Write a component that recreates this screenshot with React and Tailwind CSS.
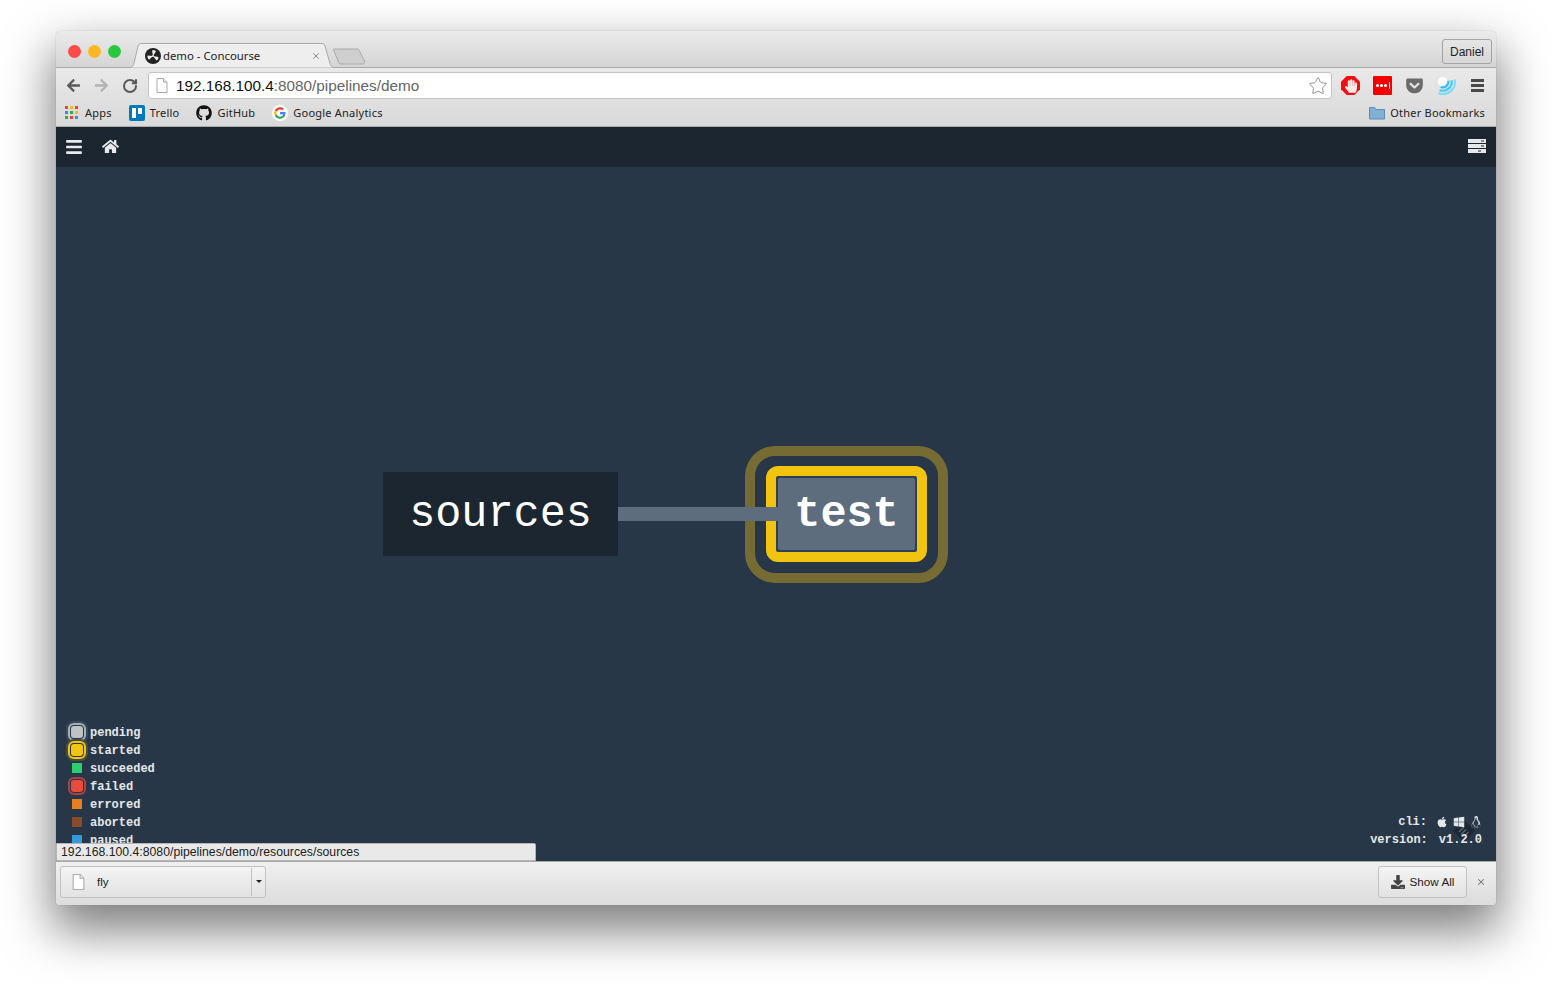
import React from "react";
import { FaGithub, FaHome, FaBars, FaApple, FaWindows, FaLinux, FaHandPaper, FaGetPocket, FaArrowLeft, FaArrowRight, FaDownload } from "react-icons/fa";
import { RotateCw, Star, X } from "lucide-react";

const ui = { fontFamily: '"Noto Sans", "DejaVu Sans", sans-serif' };
const sans = { fontFamily: '"Liberation Sans", sans-serif' };
const mono = { fontFamily: '"Liberation Mono", monospace' };

function Page({ className = "" }) {
  return (
    <svg viewBox="0 0 12 15" className={className}>
      <path d="M1 .5h6.5L11 4v10.5H1z" fill="#fff" stroke="#a9a9a9" />
      <path d="M7.5 .5V4H11" fill="#eee" stroke="#a9a9a9" />
    </svg>
  );
}

function Favicon() {
  return (
    <svg viewBox="0 0 16 16" className="w-4 h-4">
      <circle cx="8" cy="8" r="8" fill="#222" />
      <path d="M8 8 7 2.500c2-.6 3.500 0 4 .8zM8 8l5.500 1c.1 2-1 3.200-2 3.500zM8 8l-4 3.800C2.500 10.500 2.200 8.700 2.600 7.600z" fill="#eee" />
      <circle cx="8" cy="8" r="1" fill="#eee" />
    </svg>
  );
}

function GoogleG() {
  return (
    <svg viewBox="0 0 48 48" className="w-[16px] h-[16px] bg-white rounded-full p-[2px]">
      <path fill="#EA4335" d="M24 9.500c3.500 0 6.700 1.200 9.200 3.600l6.900-6.900C35.900 2.400 30.500 0 24 0 14.600 0 6.500 5.400 2.600 13.200l8 6.200C12.400 13.700 17.700 9.500 24 9.500z" />
      <path fill="#4285F4" d="M46.100 24.500c0-1.600-.1-3.100-.4-4.500H24v9h12.400c-.5 2.900-2.200 5.300-4.600 7l7.700 6c4.500-4.200 6.600-10.300 6.600-17.500z" />
      <path fill="#FBBC05" d="M10.500 28.600c-.5-1.400-.8-3-.8-4.600s.3-3.200.8-4.600l-8-6.200C.9 16.500 0 20.100 0 24s.9 7.500 2.600 10.800l7.900-6.200z" />
      <path fill="#34A853" d="M24 48c6.500 0 11.900-2.100 15.900-5.800l-7.700-6c-2.200 1.400-4.900 2.300-8.200 2.300-6.300 0-11.600-4.200-13.500-9.900l-8 6.200C6.500 42.600 14.600 48 24 48z" />
    </svg>
  );
}

function Apps() {
  const c = ["#ea4335", "#fbbc05", "#ea4335", "#4285f4", "#34a853", "#fbbc05", "#34a853", "#ea4335", "#4285f4"];
  return (
    <div className="grid grid-cols-3 gap-[2px] w-[13px]">
      {c.map((x, i) => (
        <div key={i} className="w-[3px] h-[3px]" style={{ backgroundColor: x }} />
      ))}
    </div>
  );
}

function Bookmark({ icon, label, className = "" }) {
  return (
    <div className={"flex items-center gap-[5px] " + className}>
      {icon}
      <span className="text-[11px] text-[#222] leading-none tracking-[0.22px]">{label}</span>
    </div>
  );
}

function Server() {
  return (
    <svg viewBox="0 0 18 15" className="w-[18px] h-[15px]">
      {[0, 5, 10].map((y) => (
        <g key={y}>
          <rect x="0" y={y} width="18" height="4" fill="#e6e9ec" />
          <rect x={y === 10 ? 10 : 13} y={y + 1.500} width="3" height="1" fill="#1b2631" />
        </g>
      ))}
    </svg>
  );
}

const legend = [
  ["pending", "bg-[#bdc3c7]", "shadow-[0_0_0_1px_#283747,0_0_0_3px_#a9b0b5,0_0_0_5px_#3a4959]"],
  ["started", "bg-[#f1c40f]", "shadow-[0_0_0_1px_#283747,0_0_0_3px_#f1c40f,0_0_0_5px_#4a4f3e]"],
  ["succeeded", "bg-[#2ecc71]", ""],
  ["failed", "bg-[#e74c3c]", "shadow-[0_0_0_1px_#283747,0_0_0_3px_#a94442]"],
  ["errored", "bg-[#e67e22]", ""],
  ["aborted", "bg-[#8b4a2b]", ""],
  ["paused", "bg-[#3498db]", ""],
];

function Legend() {
  return (
    <div className="absolute left-[16px] top-[556px] flex flex-col" style={mono}>
      {legend.map(([name, bg, ring]) => (
        <div key={name} className="flex items-center h-[18px]">
          <div className="w-[10px] flex justify-center">
            {ring ? (
              <div className={"w-[12px] h-[12px] shrink-0 rounded-[3px] " + bg + " " + ring} />
            ) : (
              <div className={"w-[10px] h-[10px] shrink-0 " + bg} />
            )}
          </div>
          <span className="ml-[8px] mt-[2px] text-[12px] font-bold text-[#e4e7ea] leading-none">{name}</span>
        </div>
      ))}
    </div>
  );
}

function Pipeline() {
  return (
    <>
      <div className="absolute left-[327px] top-[305px] w-[235px] h-[84px] pt-[2px] bg-[#1b2631] flex items-center justify-center text-white text-[43.500px] leading-none" style={mono}>
        sources
      </div>
      <div className="absolute left-[689px] top-[279px] w-[203px] h-[137px] rounded-[30px] border-[10px] border-[#756b33]" />
      <div className="absolute left-[710px] top-[299px] w-[161px] h-[96px] rounded-[12px] border-[10px] border-[#f1c40f] bg-[#2e4053] p-[2px]">
        <div className="relative w-full h-full pt-[2px] rounded-[2px] bg-[#5d6d7e] flex items-center justify-center text-white text-[43.500px] font-bold leading-none" style={mono}>
          test
        </div>
      </div>
      <div className="absolute left-[562px] top-[340px] w-[161px] h-[14px] bg-[#5d6d7e]" />
    </>
  );
}

export default function App() {
  return (
    <div className="w-[1552px] h-[985px] bg-white overflow-hidden pt-[31px] pl-[56px]" style={ui}>
      <div className="w-[1440px] h-[874px] rounded-t-[5px] rounded-b-[4px] overflow-hidden flex flex-col shadow-[0_22px_48px_4px_rgba(0,0,0,0.5),0_0_1px_rgba(0,0,0,0.4)]">
        {/* Tab strip */}
        <div className="relative h-[37px] shrink-0 bg-gradient-to-b from-[#ebebeb] to-[#d5d5d5] border-b border-[#a9a9a9] flex items-center">
          <div className="flex items-center gap-[7px] pl-[12px] mt-[4px]">
            <div className="w-[13px] h-[13px] rounded-full bg-[#fc4a47]" />
            <div className="w-[13px] h-[13px] rounded-full bg-[#fdb824]" />
            <div className="w-[13px] h-[13px] rounded-full bg-[#28c83f]" />
          </div>
          <svg viewBox="0 0 212 25" className="absolute left-[72px] top-[12px] w-[212px] h-[25px]">
            <path d="M0 24.500c4 0 5-1 6-4L10 3c.5-1.700 1.500-2.500 3-2.500h181c1.500 0 2.500.8 3 2.500l5 17.500c1 3 2 4 6 4" fill="#eeeeee" stroke="#a9a9a9" />
          </svg>
          <svg viewBox="0 0 34 17" className="absolute left-[277px] top-[17px] w-[34px] h-[17px]">
            <path d="M1 1h23c1 0 2 .5 2.500 2l5 10c.5 2-.5 3-2 3H8c-1.500 0-2-.5-2.500-2L1 3C.5 1.500 0 1 1 1z" fill="#cfcfcf" stroke="#a9a9a9" />
          </svg>
          <div className="absolute left-[89px] top-[17px] flex items-center gap-[2px]">
            <Favicon />
            <span className="text-[11.350px] text-[#222] leading-none -mt-[1px]">demo - Concourse</span>
          </div>
          <X className="absolute left-[255px] top-[20px] w-[10px] h-[10px] text-[#777]" strokeWidth={2} />
          <div className="ml-auto mr-[4px] mt-[5px] w-[50px] h-[25px] rounded-[3px] border border-[#a3a3a3] flex items-center justify-center text-[12px] text-[#222]" style={sans}>
            Daniel
          </div>
        </div>

        {/* Toolbar */}
        <div className="h-[32px] shrink-0 bg-gradient-to-b from-[#e9e9e9] to-[#e0e0e0] flex items-center pl-[10px] pr-[10px] pt-[3px]">
          <FaArrowLeft className="w-[15px] h-[15px] text-[#5a5a5a]" />
          <FaArrowRight className="ml-[13px] w-[15px] h-[15px] text-[#b3b3b3]" />
          <RotateCw className="ml-[13px] w-[16px] h-[16px] text-[#5a5a5a]" strokeWidth={3} />
          <div className="ml-[10px] w-[1184px] h-[27px] bg-white rounded-[3px] border border-[#c4c4c4] flex items-center pl-[7px] pr-[3px]">
            <Page className="w-[12px] h-[15px]" />
            <span className="ml-[8px] text-[15.300px] leading-none text-[#111]" style={sans}>
              192.168.100.4<span className="text-[#666]">:8080/pipelines/demo</span>
            </span>
            <Star className="ml-auto w-[20px] h-[20px] text-[#7d7d7d]" strokeWidth={1} />
          </div>
          <div className="ml-[9px] flex items-center gap-[13px]">
            <div className="w-[19px] h-[19px] bg-[#f10d12] flex items-center justify-center [clip-path:polygon(30%_0,70%_0,100%_30%,100%_70%,70%_100%,30%_100%,0_70%,0_30%)]">
              <FaHandPaper className="w-[12px] h-[14px] text-[#ffeaea]" />
            </div>
            <div className="w-[19px] h-[19px] rounded-[1px] bg-[#f40000] flex items-center justify-center gap-[1px]">
              {[0, 1, 2].map((i) => (
                <div key={i} className="w-[3px] h-[3px] rounded-full bg-white" />
              ))}
              <div className="w-[1px] h-[7px] bg-white ml-[1px]" />
            </div>
            <FaGetPocket className="w-[19px] h-[19px] text-[#6a6a6a]" />
            <svg viewBox="0 0 20 20" className="w-[19px] h-[19px]">
              <circle cx="6" cy="6" r="5" fill="#ffffff" />
              <path d="M11.900 5A6 6 0 0 1 3.900 11.600" fill="none" stroke="#2fbdf5" strokeWidth="2.200" />
              <path d="M15.400 4.300A9.500 9.500 0 0 1 2.700 14.900" fill="none" stroke="#45c8f7" strokeWidth="2.200" />
              <path d="M18.800 3.700A13 13 0 0 1 1.600 18.200" fill="none" stroke="#7bdcfb" strokeWidth="2.200" />
            </svg>
            <div className="w-[13px] ml-[2px] flex flex-col gap-[2px]">
              <div className="h-[3px] bg-[#4a4a4a]" />
              <div className="h-[3px] bg-[#4a4a4a]" />
              <div className="h-[3px] bg-[#4a4a4a]" />
            </div>
          </div>
        </div>

        {/* Bookmarks */}
        <div className="h-[26px] shrink-0 bg-gradient-to-b from-[#e0e0e0] to-[#d9d9d9] flex items-center pl-[9px] pr-[11px] pb-[1px]">
          <Bookmark icon={<Apps />} label="Apps" className="gap-[7px]" />
          <Bookmark icon={<div className="w-[16px] h-[16px] rounded-[2px] bg-[#0079bf] flex gap-[2px] p-[3px] items-start"><div className="w-[4px] h-[10px] bg-white" /><div className="w-[4px] h-[6px] bg-white" /></div>} label="Trello" className="ml-[17px]" />
          <Bookmark icon={<FaGithub className="w-[16px] h-[16px] text-[#111]" />} label="GitHub" className="ml-[17px]" />
          <Bookmark icon={<GoogleG />} label="Google Analytics" className="ml-[17px]" />
          <Bookmark
            className="ml-auto"
            label="Other Bookmarks"
            icon={
              <svg viewBox="0 0 16 14" className="w-[16px] h-[14px]">
                <path d="M.5 13V1.500h5l1.500 2h8.500V13z" fill="#7fb0d6" stroke="#5f8cad" />
              </svg>
            }
          />
        </div>

        {/* App nav */}
        <div className="h-[41px] shrink-0 border-t border-[#a9a9a9] bg-[#1b2631] flex items-center pl-[10px] pr-[10px] pb-[1px]">
          <FaBars className="w-[16px] h-[18px] text-[#e8eaec]" />
          <FaHome className="ml-[20px] w-[17px] h-[17px] text-[#e8eaec]" />
          <div className="ml-auto">
            <Server />
          </div>
        </div>

        {/* Canvas */}
        <div className="relative flex-1 bg-[#283747] overflow-hidden">
          <Pipeline />
          <Legend />
          <svg viewBox="0 0 22 22" className="absolute left-[1397px] top-[653px] w-[22px] h-[22px]">
            <path d="M11 0 22 11 11 22 0 11z" fill="#161e28" fillOpacity="0.6" />
            <path d="M6 12l5-5M8 14.500l5-5M10.500 17l5-5" stroke="#5a6672" strokeWidth="1.300" />
          </svg>
          <div className="absolute right-[14px] top-[646px] flex flex-col items-end text-[12px] font-bold text-[#e4e7ea] leading-[18px]" style={mono}>
            <div className="flex items-center">
              <span>cli:</span>
              <FaApple className="ml-[9px] w-[12px] h-[12px]" />
              <FaWindows className="ml-[5px] w-[12px] h-[12px]" />
              <FaLinux className="ml-[5px] w-[12px] h-[12px]" />
            </div>
            <div className="flex">
              <span>version:</span>
              <span className="ml-[11px]">v1.2.0</span>
            </div>
          </div>
          <div className="absolute left-0 bottom-0 w-[480px] h-[18px] bg-[#e9e9e9] border border-[#b5b5b5] rounded-tr-[2px] flex items-center pl-[4px] text-[12.250px] text-[#222] leading-none" style={sans}>
            192.168.100.4:8080/pipelines/demo/resources/sources
          </div>
        </div>

        {/* Download shelf */}
        <div className="h-[44px] shrink-0 border-t border-[#a9a9a9] bg-gradient-to-b from-[#f0f0f0] to-[#dcdcdc] flex items-center pl-[4px] pr-[10px] pb-[4px]">
          <div className="w-[206px] h-[32px] rounded-[3px] border border-[#c2c2c2] flex items-center bg-gradient-to-b from-[#f4f4f4] to-[#e2e2e2]">
            <Page className="ml-[11px] w-[13px] h-[16px]" />
            <span className="ml-[12px] text-[11.700px] text-[#222] leading-none" style={sans}>fly</span>
            <div className="ml-auto w-[14px] h-[28px] border-l border-[#c2c2c2] flex items-center justify-center">
              <div className="w-0 h-0 border-x-[3px] border-x-transparent border-t-[3px] border-t-[#222]" />
            </div>
          </div>
          <div className="ml-auto w-[89px] h-[32px] rounded-[3px] border border-[#c2c2c2] flex items-center justify-center gap-[5px] bg-gradient-to-b from-[#f4f4f4] to-[#e2e2e2]">
            <FaDownload className="w-[14px] h-[14px] text-[#444]" />
            <span className="text-[11.700px] text-[#222] leading-none" style={sans}>Show All</span>
          </div>
          <X className="ml-[9px] w-[10px] h-[10px] text-[#777]" strokeWidth={2.500} />
        </div>
      </div>
    </div>
  );
}
